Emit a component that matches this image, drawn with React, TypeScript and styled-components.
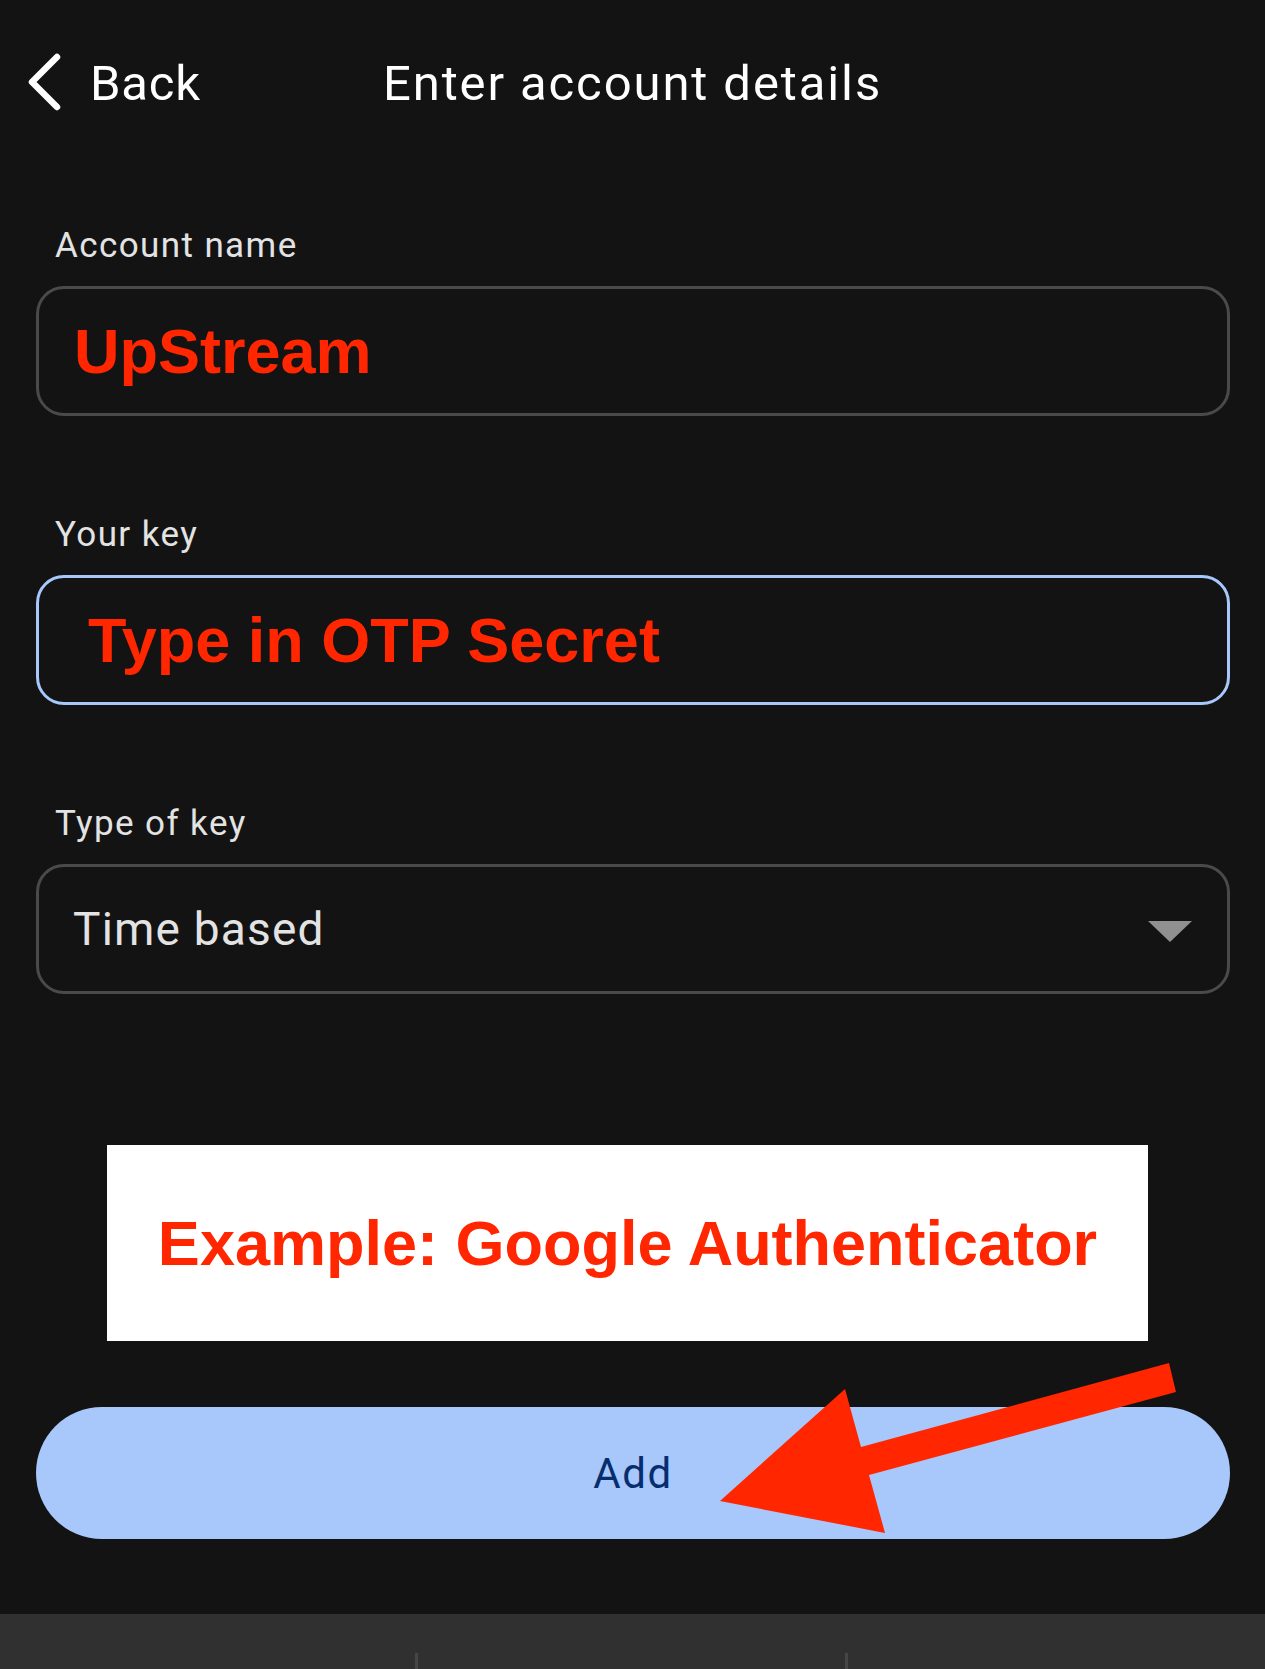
import styled, { createGlobalStyle } from "styled-components";

const GlobalStyle = createGlobalStyle`
  html, body {
    margin: 0;
    padding: 0;
    background: #131313;
  }
  body {
    font-family: Roboto, "Noto Sans", sans-serif;
    -webkit-font-smoothing: antialiased;
  }
`;

const fields = [
  { label: "Account name", value: "UpStream", focused: false, inset: 35 },
  { label: "Your key", value: "Type in OTP Secret", focused: true, inset: 49 },
];

const BackIcon = () => (
  <svg width="40" height="64" viewBox="0 0 40 64">
    <path
      d="M32 6 L7 31 L32 56"
      fill="none"
      stroke="#ffffff"
      strokeWidth="6.5"
      strokeLinecap="round"
      strokeLinejoin="round"
    />
  </svg>
);

const Arrow = () => (
  <ArrowSvg width="500" height="200" viewBox="0 0 500 200">
    <polygon
      points="20,151 145,39 161,97 469,13 476,42 169,125 185,183"
      fill="#ff2600"
    />
  </ArrowSvg>
);

export default function App() {
  return (
    <>
      <GlobalStyle />
      <Page>
        <Header>
          <BackButton>
            <BackIcon />
            <span>Back</span>
          </BackButton>
          <Title>Enter account details</Title>
          <span />
        </Header>

        <Form>
          {fields.map((f) => (
            <Field key={f.label}>
              <Label>{f.label}</Label>
              <InputBox $focused={f.focused} $inset={f.inset}>
                <Overlay>{f.value}</Overlay>
              </InputBox>
            </Field>
          ))}
          <Field>
            <Label>Type of key</Label>
            <SelectBox>
              <SelectValue>Time based</SelectValue>
              <Caret />
            </SelectBox>
          </Field>
        </Form>

        <Note>
          <Overlay>Example: Google Authenticator</Overlay>
        </Note>

        <AddButton>Add</AddButton>

        <BottomBar>
          <Divider />
          <Divider />
        </BottomBar>

        <Arrow />
      </Page>
    </>
  );
}

const Page = styled.div`
  position: relative;
  width: 1265px;
  min-height: 1669px;
  background: #131313;
  overflow: hidden;
`;

const Header = styled.div`
  height: 166px;
  display: grid;
  grid-template-columns: 1fr auto 1fr;
  align-items: center;
  padding-left: 25px;
  padding-right: 25px;
  box-sizing: border-box;
`;

const BackButton = styled.div`
  display: flex;
  align-items: center;
  gap: 25px;
  color: #ffffff;
  font-size: 49px;
  letter-spacing: 0.8px;
  svg {
    flex: none;
  }
`;

const Title = styled.div`
  color: #ffffff;
  font-size: 49px;
  letter-spacing: 1.9px;
  white-space: nowrap;
`;

const Form = styled.div`
  display: flex;
  flex-direction: column;
  gap: 99px;
  padding: 60px 35px 0 36px;
`;

const Field = styled.div`
  display: flex;
  flex-direction: column;
`;

const Label = styled.div`
  color: #e3e3e3;
  font-size: 35px;
  line-height: 40px;
  height: 40px;
  letter-spacing: 1.4px;
  margin: 0 0 20px 19px;
`;

const InputBox = styled.div<{ $focused?: boolean; $inset: number }>`
  box-sizing: border-box;
  height: 130px;
  border: 3px solid ${(p) => (p.$focused ? "#a8c7fa" : "#4a4a4a")};
  border-radius: 28px;
  display: flex;
  align-items: center;
  padding-left: ${(p) => p.$inset}px;
`;

const Overlay = styled.span`
  font-family: "Liberation Sans", Arial, sans-serif;
  font-weight: 700;
  font-size: 63px;
  color: #ff2600;
  white-space: nowrap;
`;

const SelectBox = styled.div`
  box-sizing: border-box;
  height: 130px;
  border: 3px solid #4a4a4a;
  border-radius: 28px;
  display: flex;
  align-items: center;
  justify-content: space-between;
  padding: 0 35px 0 34px;
`;

const SelectValue = styled.span`
  color: #e3e3e3;
  font-size: 46px;
  letter-spacing: 1.2px;
`;

const Caret = styled.span`
  width: 0;
  height: 0;
  border-left: 22px solid transparent;
  border-right: 22px solid transparent;
  border-top: 21px solid #8f908f;
  margin-top: 4px;
`;

const Note = styled.div`
  margin: 151px 0 0 107px;
  width: 1041px;
  height: 196px;
  background: #ffffff;
  display: flex;
  align-items: center;
  justify-content: center;
`;

const AddButton = styled.div`
  margin: 66px 35px 0 36px;
  height: 132px;
  border-radius: 66px;
  background: #a8c7fa;
  color: #062e6f;
  font-size: 42px;
  letter-spacing: 1.5px;
  display: flex;
  align-items: center;
  justify-content: center;
`;

const BottomBar = styled.div`
  margin-top: 75px;
  height: 120px;
  background: #303030;
  display: flex;
  align-items: flex-start;
  padding: 39px 0 0 415px;
  gap: 427px;
  box-sizing: border-box;
`;

const Divider = styled.span`
  width: 3px;
  height: 60px;
  background: #464646;
`;

const ArrowSvg = styled.svg`
  position: absolute;
  left: 700px;
  top: 1350px;
`;
